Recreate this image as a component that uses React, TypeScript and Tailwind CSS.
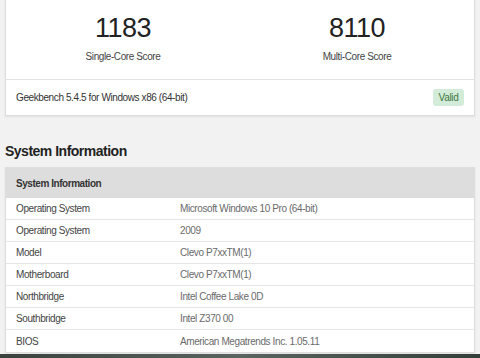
import React from 'react'

interface InfoRow {
  label: string
  value: string
}

const rows: InfoRow[] = [
  { label: 'Operating System', value: 'Microsoft Windows 10 Pro (64-bit)' },
  { label: 'Operating System', value: '2009' },
  { label: 'Model', value: 'Clevo P7xxTM(1)' },
  { label: 'Motherboard', value: 'Clevo P7xxTM(1)' },
  { label: 'Northbridge', value: 'Intel Coffee Lake 0D' },
  { label: 'Southbridge', value: 'Intel Z370 00' },
  { label: 'BIOS', value: 'American Megatrends Inc. 1.05.11' },
]

const Score: React.FC<{ score: string; label: string }> = ({ score, label }) => (
  <div className="flex flex-1 flex-col items-center">
    <span className="text-[27px] leading-[30px] tracking-[-0.5px] text-[#222]">{score}</span>
    <span className="mt-[7px] text-[10px] leading-[14px] tracking-[-0.4px] text-[#444]">{label}</span>
  </div>
)

const App: React.FC = () => {
  return (
    <div
      className="h-[358px] overflow-hidden bg-[#f2f2f2] px-[5px]"
      style={{ fontFamily: '"Liberation Sans", Arial, sans-serif' }}
    >
      <div className="border border-t-0 border-[#dedede] bg-white shadow-[0_1px_2px_rgba(0,0,0,0.08)]">
        <div className="flex pt-[13px] pb-[15px]">
          <Score score="1183" label="Single-Core Score" />
          <Score score="8110" label="Multi-Core Score" />
        </div>
        <div className="flex h-[36px] items-center justify-between border-t border-[#e3e3e3] px-[10px]">
          <span className="text-[10px] tracking-[-0.4px] text-[#333]">
            Geekbench 5.4.5 for Windows x86 (64-bit)
          </span>
          <span className="flex h-[17px] w-[31px] items-center justify-center rounded-[3px] bg-[#d3ecd9] text-[10px] tracking-[-0.3px] text-[#3c763d]">
            Valid
          </span>
        </div>
      </div>

      <h2 className="mt-[25px] mb-[6px] text-[14px] leading-[20px] font-bold tracking-[-0.5px] text-[#222]">
        System Information
      </h2>

      <div className="border border-[#dedede] bg-white shadow-[0_1px_2px_rgba(0,0,0,0.08)]">
        <div className="flex h-[30px] items-center bg-[#dddddd] px-[10px] text-[10px] font-bold tracking-[-0.45px] text-[#333]">
          System Information
        </div>
        {rows.map((row, i) => (
          <div
            key={i}
            className="flex h-[22px] items-center border-b border-[#e6e6e6] px-[10px] text-[10px] tracking-[-0.4px] last:border-b-0"
          >
            <span className="w-[164px] text-[#444]">{row.label}</span>
            <span className="text-[#6a6a6a]">{row.value}</span>
          </div>
        ))}
      </div>

      <div className="-mx-[5px] mt-px h-[10px] bg-gradient-to-r from-[#3b423d] via-[#5a655e] to-[#33403a]" />
    </div>
  )
}

export default App
